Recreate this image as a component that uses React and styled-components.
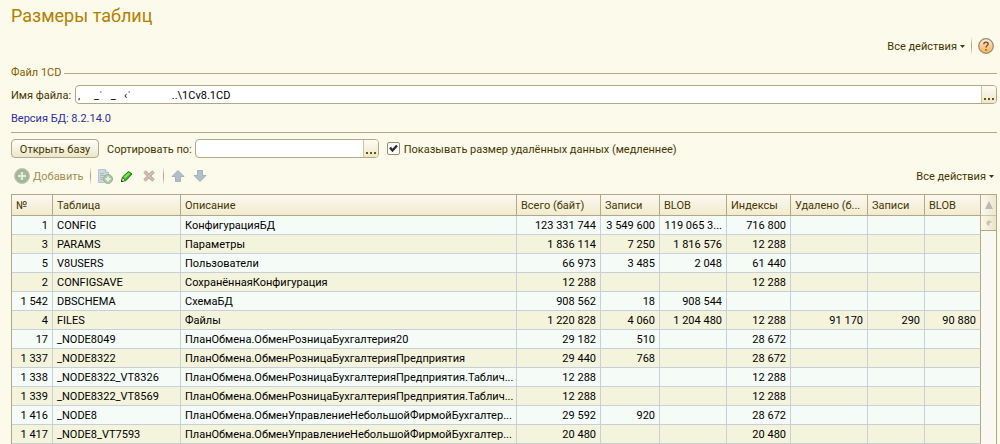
import React, { useState } from 'react';
import styled, { createGlobalStyle, ThemeProvider } from 'styled-components';

const theme = {
  colors: {
    page: '#fcfaeb',
    title: '#b38000',
    legend: '#8c5a00',
    label: '#453600',
    link: '#2e2e9e',
    line: '#b3a886',
    gridLine: '#c8cfd8',
    rowOdd: '#f5fbf7',
    rowEven: '#f4f3db',
  },
};

const columns = [
  { title: '№', width: 41, numeric: true },
  { title: 'Таблица', width: 128 },
  { title: 'Описание' },
  { title: 'Всего (байт)', width: 84, numeric: true },
  { title: 'Записи', width: 59, numeric: true },
  { title: 'BLOB', width: 67, numeric: true },
  { title: 'Индексы', width: 64, numeric: true },
  { title: 'Удалено (б...', width: 77, numeric: true },
  { title: 'Записи', width: 57, numeric: true },
  { title: 'BLOB', width: 56, numeric: true },
];

const rows = [
  ['1', 'CONFIG', 'КонфигурацияБД', '123 331 744', '3 549 600', '119 065 3...', '716 800', '', '', ''],
  ['3', 'PARAMS', 'Параметры', '1 836 114', '7 250', '1 816 576', '12 288', '', '', ''],
  ['5', 'V8USERS', 'Пользователи', '66 973', '3 485', '2 048', '61 440', '', '', ''],
  ['2', 'CONFIGSAVE', 'СохранённаяКонфигурация', '12 288', '', '', '12 288', '', '', ''],
  ['1 542', 'DBSCHEMA', 'СхемаБД', '908 562', '18', '908 544', '', '', '', ''],
  ['4', 'FILES', 'Файлы', '1 220 828', '4 060', '1 204 480', '12 288', '91 170', '290', '90 880'],
  ['17', '_NODE8049', 'ПланОбмена.ОбменРозницаБухгалтерия20', '29 182', '510', '', '28 672', '', '', ''],
  ['1 337', '_NODE8322', 'ПланОбмена.ОбменРозницаБухгалтерияПредприятия', '29 440', '768', '', '28 672', '', '', ''],
  ['1 338', '_NODE8322_VT8326', 'ПланОбмена.ОбменРозницаБухгалтерияПредприятия.Таблич...', '12 288', '', '', '12 288', '', '', ''],
  ['1 339', '_NODE8322_VT8569', 'ПланОбмена.ОбменРозницаБухгалтерияПредприятия.Таблич...', '12 288', '', '', '12 288', '', '', ''],
  ['1 416', '_NODE8', 'ПланОбмена.ОбменУправлениеНебольшойФирмойБухгалтер...', '29 592', '920', '', '28 672', '', '', ''],
  ['1 417', '_NODE8_VT7593', 'ПланОбмена.ОбменУправлениеНебольшойФирмойБухгалтер...', '20 480', '', '', '20 480', '', '', ''],
];

function AddIcon() {
  return (
    <svg width="16" height="16" viewBox="0 0 16 16" aria-hidden="true">
      <circle cx="8" cy="8" r="7.5" fill="#a9bda0" stroke="#c0c6b2" />
      <circle cx="8" cy="8" r="5.5" fill="none" stroke="#98b193" />
      <path d="M7 4h2v3h3v2H9v3H7V9H4V7h3z" fill="#e6ecd9" />
    </svg>
  );
}

function CopyIcon() {
  return (
    <svg width="16" height="16" viewBox="0 0 16 16" aria-hidden="true">
      <path d="M1.500 1.500h7l3 3v10h-10z" fill="#cfd9dd" stroke="#b7c6cd" />
      <path d="M8.500 1.500v3h3" fill="#eef1ea" stroke="#aebfc8" />
      <path d="M3 5.500h4M3 7.500h6M3 9.500h4M3 11.500h3" stroke="#a4b7c4" />
      <circle cx="11" cy="11" r="4.500" fill="#b0c7a6" stroke="#9bb494" />
      <path d="M10 8.500h2V10h1.500v2H12v1.500h-2V12H8.500v-2H10z" fill="#eaf0df" />
    </svg>
  );
}

function EditIcon() {
  return (
    <svg width="12" height="12" viewBox="0 0 12 12" aria-hidden="true">
      <path d="M.5 11.500l1-4.500 6-5.500L11 4l-6 6.500z" fill="#35b81d" stroke="#187a0c" />
      <path d="M2.500 7l5-4.500L9 4 4 8.500z" fill="#7fe05e" />
      <path d="M.5 11.500l1-4 3 3z" fill="#f3ecc4" stroke="#27611a" strokeWidth=".7" />
      <path d="M0 12v-2l2 2z" fill="#153f10" />
    </svg>
  );
}

function DeleteIcon() {
  return (
    <svg width="12" height="12" viewBox="0 0 12 12" aria-hidden="true">
      <path d="M1.500 1.500l9 9M10.500 1.500l-9 9" stroke="#bda59f" strokeWidth="3.200" />
      <path d="M1.500 1.500l9 9M10.500 1.500l-9 9" stroke="#d6c3bb" strokeWidth="1.400" />
    </svg>
  );
}

function ArrowIcon({ down }) {
  return (
    <svg width="14" height="14" viewBox="0 0 14 14" aria-hidden="true">
      <path
        d={
          down
            ? 'M4.500 1.500h5v5h3.500l-6 6-6-6h3.500z'
            : 'M4.500 12.500h5v-5h3.500l-6-6-6 6h3.500z'
        }
        fill="#b0bfca"
        stroke="#a2b2bf"
      />
    </svg>
  );
}

function HelpIcon() {
  return (
    <svg width="16" height="16" viewBox="0 0 16 16" aria-hidden="true">
      <defs>
        <linearGradient id="help" x1="0" y1="0" x2="0" y2="1">
          <stop offset="0" stopColor="#fdf0dc" />
          <stop offset="0.5" stopColor="#f8cd92" />
          <stop offset="1" stopColor="#fbb24c" />
        </linearGradient>
      </defs>
      <circle cx="8" cy="8" r="7.300" fill="url(#help)" stroke="#9a8778" strokeWidth="1.200" />
      <path
        d="M5.800 6.300c0-2.800 4.400-2.800 4.400-.4 0 1.700-2.200 1.500-2.200 3.600M8 11v1.500"
        fill="none"
        stroke="#7d4a35"
        strokeWidth="1.400"
      />
    </svg>
  );
}

function AllActions() {
  return (
    <ToolButton type="button">
      <Caption>Все действия</Caption>
      <svg width="5" height="3" viewBox="0 0 5 3" aria-hidden="true">
        <path d="M0 0h5L2.500 3z" fill="#453600" />
      </svg>
    </ToolButton>
  );
}

function PickerField({ id, value, width }) {
  const [text, setText] = useState(value);

  return (
    <Field $width={width}>
      <input
        id={id}
        type="text"
        value={text}
        onChange={(event) => setText(event.target.value)}
      />
      <button type="button" aria-label="Выбрать">
        <svg width="10" height="2" viewBox="0 0 10 2" aria-hidden="true">
          <path d="M0 0h2v2H0zM4 0h2v2H4zM8 0h2v2H8z" fill="#6b5500" />
        </svg>
      </button>
    </Field>
  );
}

function SizesTable() {
  return (
    <TableFrame>
      <Table>
        <colgroup>
          {columns.map((column, index) => (
            <Col key={index} $width={column.width} />
          ))}
        </colgroup>
        <thead>
          <tr>
            {columns.map((column, index) => (
              <HeadCell key={index} scope="col">
                {column.title}
              </HeadCell>
            ))}
          </tr>
        </thead>
        <tbody>
          {rows.map((row) => (
            <Row key={row[0]}>
              {row.map((value, index) => (
                <Cell key={index} $numeric={columns[index].numeric}>
                  {value}
                </Cell>
              ))}
            </Row>
          ))}
        </tbody>
      </Table>
      <ScrollBar>
        <ScrollUp type="button" aria-label="Вверх">
          <svg width="8" height="8" viewBox="0 0 8 8" aria-hidden="true">
            <path d="M4 0l4 8H0z" fill="#bdb9ae" />
          </svg>
        </ScrollUp>
        <ScrollThumb>
          <svg width="6" height="6" viewBox="0 0 6 6" aria-hidden="true">
            <circle cx="3" cy="3" r="2.500" fill="#c9c3ac" />
            <path d="M3.500 3H6v2.500H3.500z" fill="#f6f1dc" />
          </svg>
        </ScrollThumb>
      </ScrollBar>
    </TableFrame>
  );
}

function App() {
  const [showDeleted, setShowDeleted] = useState(true);

  return (
    <ThemeProvider theme={theme}>
      <GlobalStyle />
      <Page>
        <Title>Размеры таблиц</Title>

        <TopBar>
          <AllActions />
          <Separator />
          <IconButton type="button" aria-label="Справка">
            <HelpIcon />
          </IconButton>
        </TopBar>

        <Legend>Файл 1CD</Legend>

        <FormRow>
          <FieldLabel htmlFor="file">Имя файла:</FieldLabel>
          <PickerField id="file" value={'‚     _\u02c8   _   ‹\u02c8               ..\\1Cv8.1CD'} />
        </FormRow>

        <Version>Версия БД: 8.2.14.0</Version>

        <OptionsRow>
          <PushButton type="button">Открыть базу</PushButton>
          <FieldLabel htmlFor="sort">Сортировать по:</FieldLabel>
          <PickerField id="sort" value="" width={184} />
          <CheckLabel>
            <input
              type="checkbox"
              checked={showDeleted}
              onChange={(event) => setShowDeleted(event.target.checked)}
            />
            <CheckBox>
              {showDeleted && (
                <svg width="9" height="9" viewBox="0 0 9 9" aria-hidden="true">
                  <path d="M1 3.500l2.500 3L8 1.500" fill="none" stroke="#2c2c33" strokeWidth="2.400" />
                </svg>
              )}
            </CheckBox>
            <Caption>Показывать размер удалённых данных (медленнее)</Caption>
          </CheckLabel>
        </OptionsRow>

        <ToolBar>
          <AddButton type="button" disabled>
            <AddIcon />
            <Caption>Добавить</Caption>
          </AddButton>
          <Separator />
          <IconGroup>
            <IconButton type="button" aria-label="Скопировать" disabled>
              <CopyIcon />
            </IconButton>
            <IconButton type="button" aria-label="Изменить">
              <EditIcon />
            </IconButton>
            <IconButton type="button" aria-label="Удалить" disabled>
              <DeleteIcon />
            </IconButton>
          </IconGroup>
          <Separator />
          <IconGroup>
            <IconButton type="button" aria-label="Переместить вверх" disabled>
              <ArrowIcon />
            </IconButton>
            <IconButton type="button" aria-label="Переместить вниз" disabled>
              <ArrowIcon down />
            </IconButton>
          </IconGroup>
          <Spacer />
          <AllActions />
        </ToolBar>

        <SizesTable />
      </Page>
    </ThemeProvider>
  );
}

const GlobalStyle = createGlobalStyle`
  * {
    box-sizing: border-box;
  }

  body {
    margin: 0;
    background: ${(props) => props.theme.colors.page};
  }

  body, button, input {
    font-family: Roboto, 'Liberation Sans', sans-serif;
    font-size: 11px;
    line-height: 16px;
    color: ${(props) => props.theme.colors.label};
  }

  button {
    padding: 0;
    border: 0;
    background: none;
  }

  svg {
    display: block;
    flex: none;
  }
`;

const Page = styled.main`
  display: flex;
  flex-direction: column;
  padding: 4px 3px 0 11px;
`;

const Title = styled.h1`
  margin: 0;
  font-size: 18px;
  line-height: 24px;
  font-weight: 400;
  color: ${(props) => props.theme.colors.title};
`;

const Caption = styled.span`
  padding-top: 2px;
`;

const TopBar = styled.div`
  display: flex;
  align-items: center;
  justify-content: flex-end;
  gap: 6px;
  height: 20px;
  margin-top: 8px;
  padding-right: 3px;
`;

const ToolButton = styled.button`
  display: flex;
  align-items: center;
  gap: 3px;
`;

const Separator = styled.span`
  width: 1px;
  height: 18px;
  background: linear-gradient(transparent, #b3a886 40%, #b3a886 60%, transparent);
`;

const IconButton = styled.button`
  display: flex;
  align-items: center;
  justify-content: center;
  min-width: 16px;
  height: 16px;
`;

const Legend = styled.div`
  display: flex;
  align-items: center;
  gap: 3px;
  margin-top: 9px;
  color: ${(props) => props.theme.colors.legend};

  &::after {
    content: '';
    flex: 1;
    height: 1px;
    background: ${(props) => props.theme.colors.line};
  }
`;

const FormRow = styled.div`
  display: flex;
  align-items: center;
  gap: 4px;
  margin-top: 4px;
`;

const FieldLabel = styled.label`
  padding-top: 2px;
`;

const Field = styled.div`
  display: flex;
  flex: ${(props) => (props.$width ? `0 0 ${props.$width}px` : '1')};
  height: 19px;
  border: 1px solid ${(props) => props.theme.colors.line};
  border-radius: 4px;
  background: #ffffff;
  overflow: hidden;

  input {
    flex: 1;
    min-width: 0;
    padding: 2px 2px 0;
    border: 0;
    outline: 0;
    background: none;
    color: #000000;
  }

  button {
    display: flex;
    align-items: flex-end;
    justify-content: center;
    width: 15px;
    padding-bottom: 3px;
    border-left: 1px solid #cdc5a6;
    background: linear-gradient(#fdfcf3, #ece7cb);
  }
`;

const Version = styled.div`
  margin-top: 7px;
  padding-bottom: 5px;
  border-bottom: 1px solid ${(props) => props.theme.colors.line};
  color: ${(props) => props.theme.colors.link};
`;

const OptionsRow = styled.div`
  display: flex;
  align-items: center;
  margin-top: 6px;

  ${FieldLabel} {
    margin: 0 3px 0 8px;
  }
`;

const PushButton = styled.button`
  width: 88px;
  height: 19px;
  padding-top: 2px;
  border: 1px solid ${(props) => props.theme.colors.line};
  border-radius: 4px;
  background: linear-gradient(#fffef9, #ece7ca);
  line-height: 15px;
`;

const CheckLabel = styled.label`
  display: flex;
  align-items: center;
  gap: 4px;
  margin-left: 8px;

  input {
    position: absolute;
    opacity: 0;
    width: 13px;
    height: 13px;
    margin: 0;
  }
`;

const CheckBox = styled.span`
  display: flex;
  align-items: center;
  justify-content: center;
  width: 13px;
  height: 13px;
  border: 1px solid #998e6a;
  border-radius: 2px;
  background: #ffffff;
`;

const ToolBar = styled.div`
  display: flex;
  align-items: center;
  gap: 6px;
  height: 20px;
  margin: 8px 0;
  padding: 0 3px;
`;

const AddButton = styled.button`
  display: flex;
  align-items: center;
  gap: 3px;
  color: #a08f52;
`;

const IconGroup = styled.div`
  display: flex;
  gap: 6px;
`;

const Spacer = styled.div`
  flex: 1;
`;

const TableFrame = styled.div`
  display: flex;
  border: 1px solid ${(props) => props.theme.colors.line};
  border-bottom: 0;
`;

const Table = styled.table`
  flex: 1;
  width: 0;
  min-width: 0;
  table-layout: fixed;
  border-collapse: separate;
  border-spacing: 0;
`;

const Col = styled.col`
  width: ${(props) => (props.$width ? `${props.$width}px` : 'auto')};
`;

const HeadCell = styled.th`
  height: 21px;
  padding: 2px 4px 0;
  border-right: 1px solid ${(props) => props.theme.colors.line};
  border-bottom: 1px solid ${(props) => props.theme.colors.line};
  background: linear-gradient(#fbf9f1, #f1ebce);
  font-weight: 400;
  text-align: left;
  white-space: nowrap;
  overflow: hidden;
`;

const Row = styled.tr`
  background: ${(props) => props.theme.colors.rowOdd};

  &:nth-child(even) {
    background: ${(props) => props.theme.colors.rowEven};
  }
`;

const Cell = styled.td`
  height: 19px;
  padding: 2px 4px 0;
  border-right: 1px solid ${(props) => props.theme.colors.gridLine};
  border-bottom: 1px solid ${(props) => props.theme.colors.gridLine};
  color: #000000;
  text-align: ${(props) => (props.$numeric ? 'right' : 'left')};
  white-space: nowrap;
  overflow: hidden;

  &:last-child {
    border-right-color: ${(props) => props.theme.colors.line};
  }
`;

const ScrollBar = styled.div`
  display: flex;
  flex-direction: column;
  width: 15px;
  background: #faf8f3;
`;

const ScrollUp = styled.button`
  display: flex;
  align-items: center;
  justify-content: center;
  height: 21px;
  border-bottom: 1px solid #cdc5a6;
  background: linear-gradient(90deg, #fbf9f1, #ece7d0);
`;

const ScrollThumb = styled.div`
  display: flex;
  align-items: center;
  justify-content: center;
  height: 15px;
  border-bottom: 1px solid ${(props) => props.theme.colors.line};
  background: linear-gradient(90deg, #fbf9ee, #ebe4c4);
`;

export default App;
